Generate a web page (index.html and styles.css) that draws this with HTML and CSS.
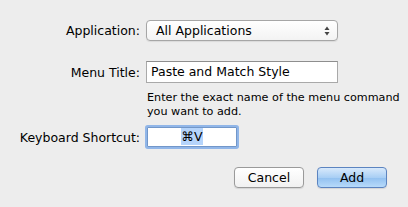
FILE: index.html
```html
<!DOCTYPE html>
<html>
<head lang="en">
    <meta charset="UTF-8">
    <title>Add Shortcut</title>
    <link rel="stylesheet" href="styles.css">
</head>
<body>
<div class="sheet">
    <div class="form">
        <label class="form-label">Application:</label>
        <div class="popup">
            <span>All Applications</span>
            <svg class="popup-arrows" width="6" height="10" viewBox="0 0 6 10">
                <path d="M3 0.5 L5.5 4 L0.5 4 Z" fill="#444"/>
                <path d="M3 9.5 L5.5 6 L0.5 6 Z" fill="#444"/>
            </svg>
        </div>

        <label class="form-label row-title">Menu Title:</label>
        <div class="text-field row-title">Paste and Match Style</div>

        <div class="help-text">Enter the exact name of the menu command<br>you want to add.</div>

        <label class="form-label">Keyboard Shortcut:</label>
        <div class="shortcut-field"><span class="selected">&#8984;V</span></div>
    </div>
    <div class="buttons">
        <a href="javascript:void(0);" class="btn">Cancel</a>
        <a href="javascript:void(0);" class="btn btn-default">Add</a>
    </div>
</div>
</body>
</html>
```
FILE: styles.css
```css
body {
    margin: 0px;
    background: #ededed;
    font-family: "DejaVu Sans", "Liberation Sans", sans-serif;
    font-size: 12.5px;
    color: #000000;
}

.sheet {
    width: 408px;
    height: 207px;
    padding-top: 20px;
    box-sizing: border-box;
}

.form {
    display: grid;
    grid-template-columns: 140px 192px;
    column-gap: 6px;
    align-items: center;
}

.form-label {
    text-align: right;
}

.row-title {
    margin-top: 20px;
}

.popup {
    height: 21px;
    box-sizing: border-box;
    border: 1px solid #a6a6a6;
    border-radius: 4px;
    background: linear-gradient(#ffffff, #f3f3f3);
    box-shadow: 0px 1px 1px rgba(0, 0, 0, 0.08);
    display: flex;
    align-items: center;
    justify-content: space-between;
    padding: 0px 7px 0px 9px;
}

.popup-arrows {
    display: block;
}

.text-field {
    height: 22px;
    box-sizing: border-box;
    border: 1px solid #a9a9a9;
    border-top-color: #8e8e8e;
    background: #ffffff;
    padding-left: 4px;
    line-height: 20px;
}

.help-text {
    grid-column: 2;
    font-size: 11.2px;
    line-height: 14px;
    margin: 8px 0px 8px 1px;
    white-space: nowrap;
}

.shortcut-field {
    width: 90px;
    height: 20px;
    box-sizing: border-box;
    margin-left: 1px;
    border: 1px solid #7297c9;
    box-shadow: 0px 0px 0px 2px #91b6e8;
    border-radius: 1px;
    background: #ffffff;
    text-align: center;
    line-height: 18px;
}

.selected {
    background: #b5d4fb;
    padding: 1px 0px;
}

.buttons {
    display: flex;
    justify-content: flex-end;
    gap: 13px;
    margin-top: 20px;
    padding-right: 21px;
}

a {
    text-decoration: none;
    color: #000000;
}

.btn {
    display: block;
    width: 70px;
    height: 21px;
    box-sizing: border-box;
    border: 1px solid #9a9a9a;
    border-radius: 4px;
    background: linear-gradient(#ffffff, #f1f1f1);
    box-shadow: 0px 1px 1px rgba(0, 0, 0, 0.1);
    text-align: center;
    line-height: 19px;
}

.btn-default {
    border-color: #5c84c0;
    background: linear-gradient(#d8e9fb, #a9cff5 50%, #91c0f0 51%, #b7dafa);
}
```
